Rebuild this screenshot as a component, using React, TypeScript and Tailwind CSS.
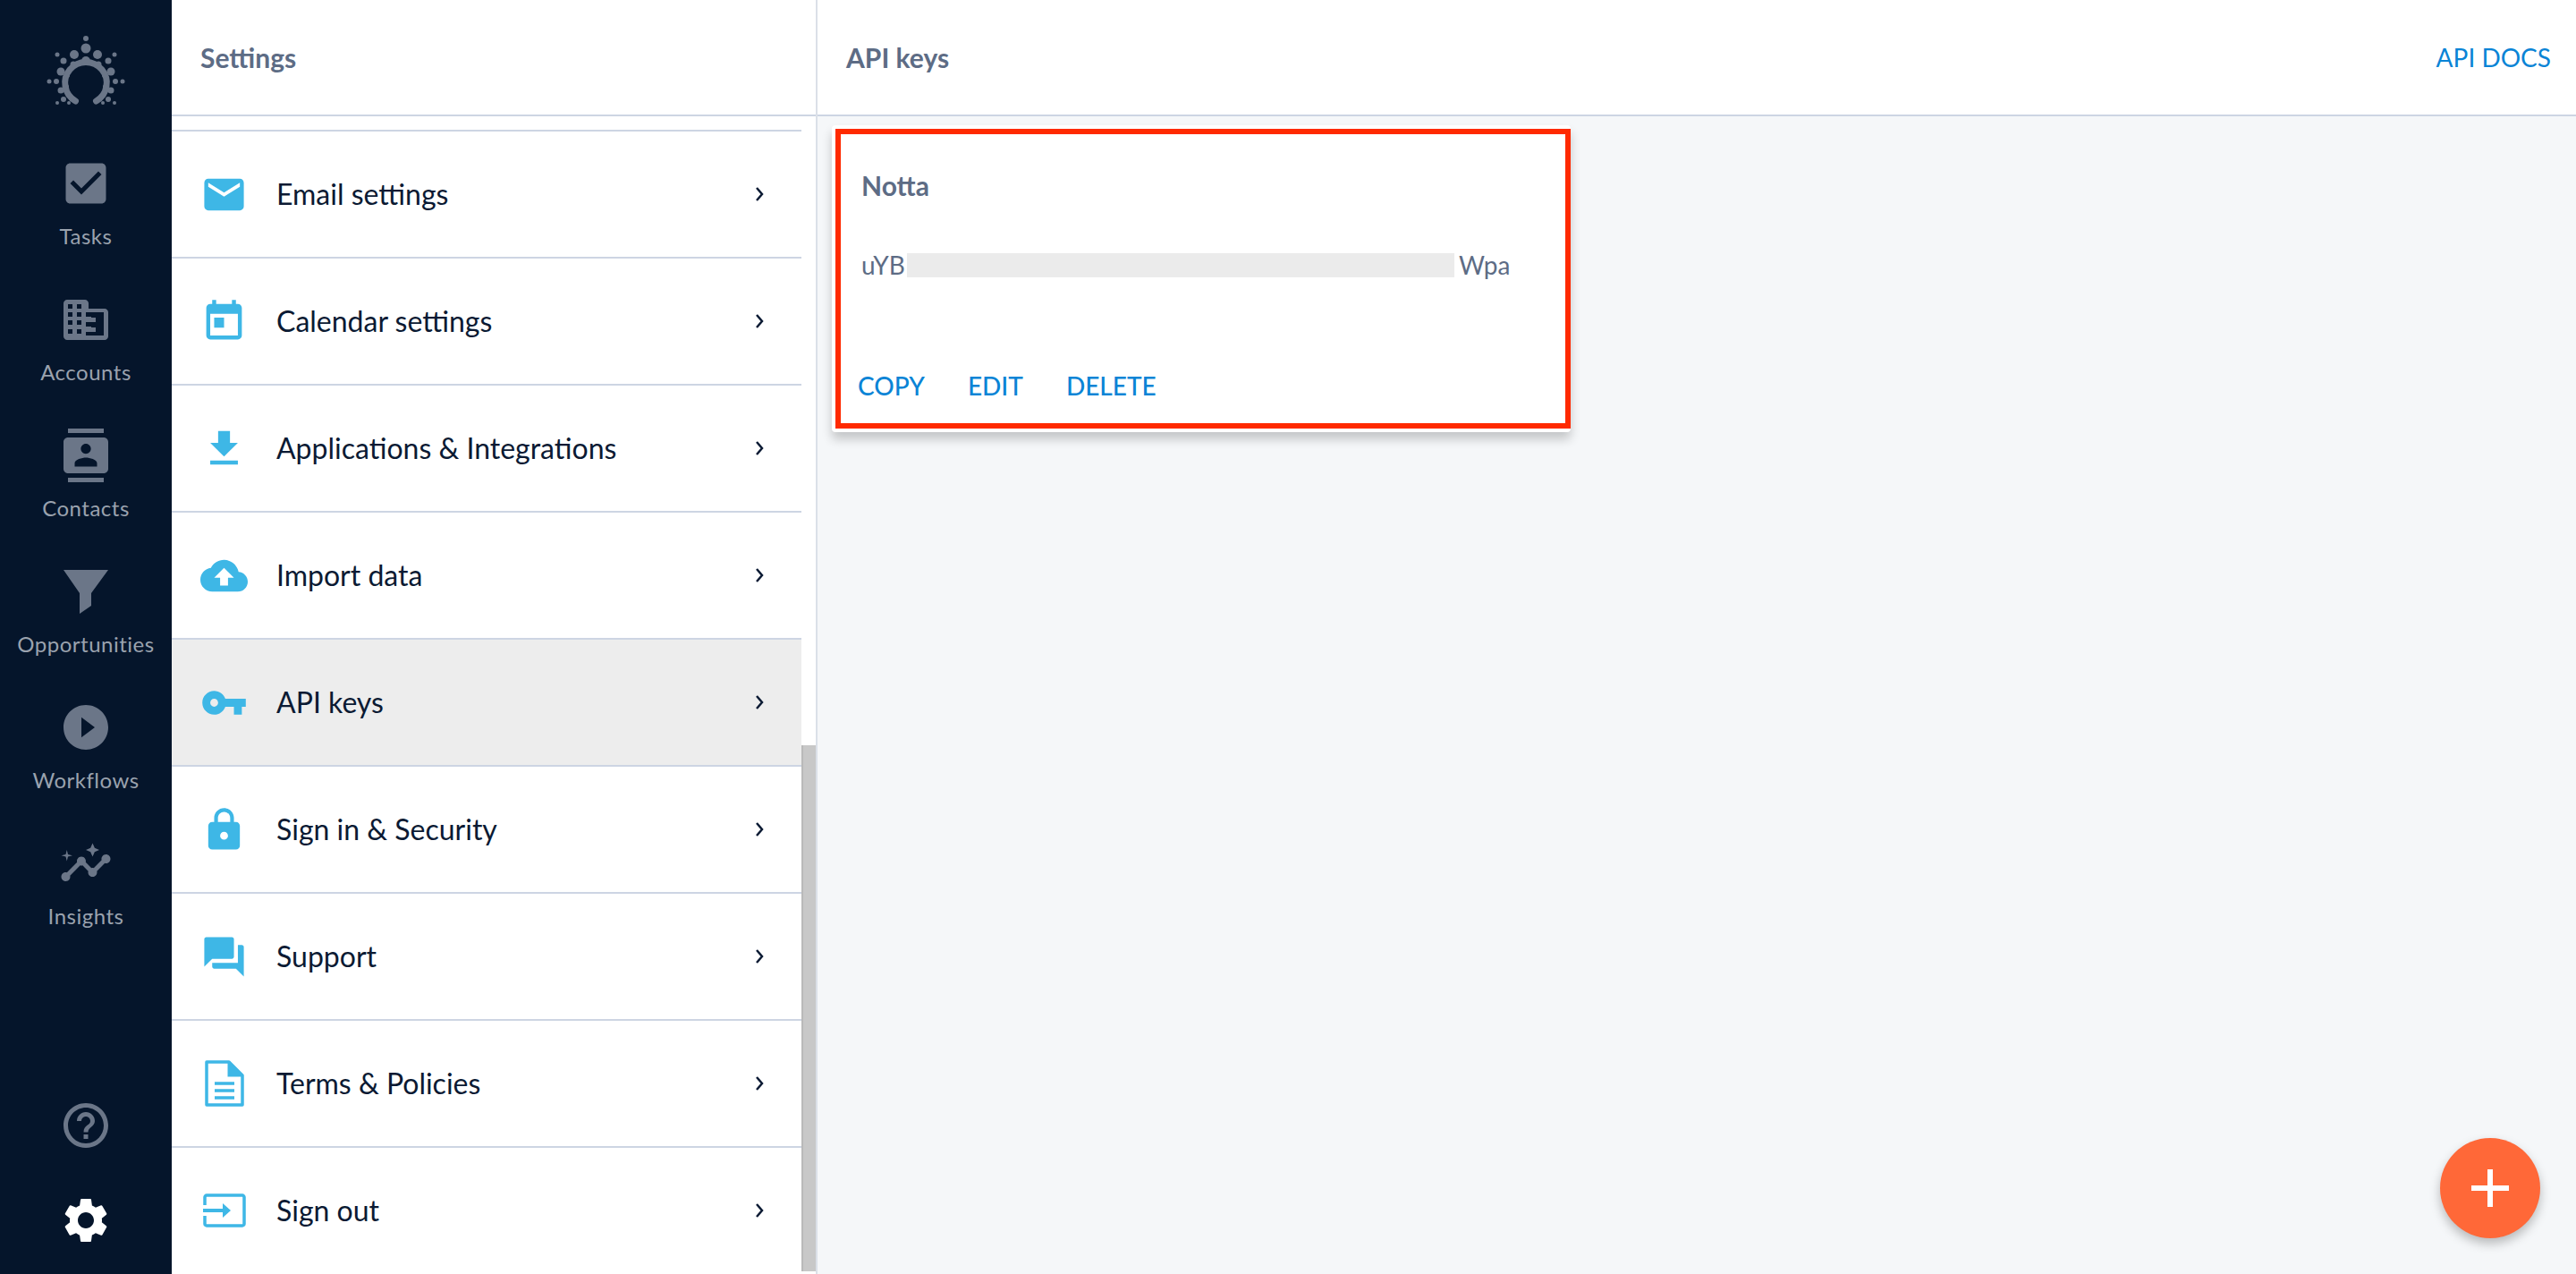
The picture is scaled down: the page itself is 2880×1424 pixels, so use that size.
import type { ReactNode } from "react";

const FONT = "font-['Lato','Noto_Sans',sans-serif]";

function Glyph({ d, size, className }: { d: string; size: number; className: string }) {
  return (
    <svg width={size} height={size} viewBox="0 0 24 24" className={className} fill="currentColor">
      <path fillRule="evenodd" d={d} />
    </svg>
  );
}

function Logo() {
  const dots = [
    [96, 43, 3],
    [96, 54, 5.5],
    [83, 61, 5],
    [109, 61, 5],
    [64, 61, 2.5],
    [128, 61, 2.5],
    [71, 68, 3.5],
    [121, 68, 3.5],
    [68, 80, 4.5],
    [124, 80, 4.5],
    [63, 91, 3],
    [129, 91, 3],
    [55, 91, 2.5],
    [137, 91, 2.5],
    [68, 101, 3.5],
    [124, 101, 3.5],
    [71, 111, 3],
    [121, 111, 3],
    [64, 115, 2],
    [128, 115, 2],
    [77, 115, 2],
    [115, 115, 2],
    [96, 68, 5],
    [82, 72, 3.5],
    [110, 72, 3.5],
    [75, 84, 3],
    [117, 84, 3],
    [74, 97, 3],
    [118, 97, 3],
  ];

  return (
    <svg width="96" height="90" viewBox="48 35 96 90" fill="#6b7688">
      <path d="M84.500 113 A23.300 23.300 0 1 1 107.500 113" fill="none" stroke="#6b7688" strokeWidth="7" strokeLinecap="round" />
      {dots.map(([cx, cy, r]) => (
        <circle key={`${cx}-${cy}`} cx={cx} cy={cy} r={r} />
      ))}
    </svg>
  );
}

function AccountsIcon() {
  return (
    <svg width="50" height="45" viewBox="0 0 50 45" fill="#6b7688">
      <path
        fillRule="evenodd"
        d="M4 0h20c2 0 4 2 4 4v6h18c2 0 4 2 4 4v27c0 2-2 4-4 4H4c-2 0-4-2-4-4V4c0-2 2-4 4-4zM5 5v5h5V5zM15 5v5h5V5zM5 14v5h5v-5zM15 14v5h5v-5zM5 23v5h5v-5zM15 23v5h5v-5zM5 33v5h5v-5zM15 33v5h5v-5zM25 14v26h20V14zM31 20h5v5h-5zM31 31h5v5h-5z"
      />
      <path d="M25 19h6v6h-6zM25 30h6v6h-6z" />
    </svg>
  );
}

function FunnelIcon() {
  return (
    <svg width="50" height="49" viewBox="0 0 50 49" fill="#6b7688">
      <path d="M0 0h50L31 26v14l-13 9V26z" />
    </svg>
  );
}

function TermsIcon() {
  return (
    <svg width="44" height="52" viewBox="0 0 44 52" fill="none" stroke="#3eb7e6">
      <path d="M2 2h25l15 15v33H2z" strokeWidth="3.500" strokeLinejoin="round" />
      <path d="M27 2v15h15" fill="#3eb7e6" strokeWidth="3" />
      <path d="M11 26h22M11 34h22M11 42h22" strokeWidth="3.500" />
    </svg>
  );
}

function SignOutIcon() {
  return (
    <svg width="48" height="38" viewBox="0 0 48 38" fill="none" stroke="#3eb7e6">
      <path d="M2 13V4c0-1 1-2 2-2h40c1 0 2 1 2 2v30c0 1-1 2-2 2H4c-1 0-2-1-2-2v-9" strokeWidth="3.500" />
      <path d="M0 19h24" strokeWidth="4" />
      <path d="M22 11l9 8-9 8z" fill="#3eb7e6" stroke="none" />
    </svg>
  );
}

const PATHS = {
  tasks:
    "M19 3H5c-1.110 0-2 .9-2 2v14c0 1.100.89 2 2 2h14c1.110 0 2-.9 2-2V5c0-1.100-.89-2-2-2zm-9 14l-5-5 1.410-1.410L10 14.170l7.590-7.590L19 8l-9 9z",
  contacts:
    "M20 0H4v2h16V0zM4 24h16v-2H4v2zM20 4H4c-1.100 0-2 .9-2 2v12c0 1.100.9 2 2 2h16c1.100 0 2-.9 2-2V6c0-1.100-.9-2-2-2zm-8 2.750c1.240 0 2.250 1.010 2.250 2.250s-1.010 2.250-2.250 2.250S9.750 10.240 9.750 9 10.760 6.750 12 6.750zM17 17H7v-1.500c0-1.670 3.330-2.500 5-2.500s5 .83 5 2.500V17z",
  workflows:
    "M12 2C6.480 2 2 6.480 2 12s4.480 10 10 10 10-4.480 10-10S17.520 2 12 2zm-2 14.500v-9l6 4.500-6 4.500z",
  insights:
    "M21 8c-1.450 0-2.260 1.440-1.930 2.510l-3.550 3.560c-.3-.09-.74-.09-1.040 0l-2.550-2.550C12.270 10.450 11.460 9 10 9c-1.450 0-2.270 1.440-1.930 2.520l-4.560 4.550C2.440 15.740 1 16.550 1 18c0 1.100.9 2 2 2 1.450 0 2.260-1.440 1.930-2.510l4.550-4.560c.3.09.74.09 1.040 0l2.550 2.550C12.730 16.550 13.540 18 15 18c1.450 0 2.270-1.440 1.930-2.520l3.560-3.550c1.070.33 2.510-.48 2.510-1.930 0-1.100-.9-2-2-2zM15 9l.94-2.070L18 6l-2.060-.93L15 3l-.92 2.070L12 6l2.080.93zM3.500 11L4 9l2-.5L4 8l-.5-2L3 8l-2 .5L3 9z",
  help:
    "M11 18h2v-2h-2v2zm1-16C6.480 2 2 6.480 2 12s4.480 10 10 10 10-4.480 10-10S17.520 2 12 2zm0 18c-4.410 0-8-3.590-8-8s3.590-8 8-8 8 3.590 8 8-3.590 8-8 8zm0-14c-2.210 0-4 1.790-4 4h2c0-1.100.9-2 2-2s2 .9 2 2c0 2-3 1.750-3 5h2c0-2.250 3-2.500 3-5 0-2.210-1.790-4-4-4z",
  gear:
    "M19.140 12.940c.04-.3.06-.61.06-.94 0-.32-.02-.64-.07-.94l2.030-1.580c.18-.14.23-.41.12-.61l-1.920-3.320c-.12-.22-.37-.29-.59-.22l-2.390.96c-.5-.38-1.030-.7-1.620-.94l-.36-2.540c-.04-.24-.24-.41-.48-.41h-3.840c-.24 0-.43.17-.47.41l-.36 2.540c-.59.24-1.130.57-1.620.94l-2.390-.96c-.22-.08-.47 0-.59.22L2.740 8.870c-.12.21-.08.47.12.61l2.030 1.580c-.05.3-.09.63-.09.94s.02.64.07.94l-2.030 1.580c-.18.14-.23.41-.12.61l1.920 3.320c.12.22.37.29.59.22l2.390-.96c.5.38 1.030.7 1.620.94l.36 2.540c.05.24.24.41.48.41h3.840c.24 0 .44-.17.47-.41l.36-2.540c.59-.24 1.130-.56 1.620-.94l2.390.96c.22.08.47 0 .59-.22l1.920-3.320c.12-.22.07-.47-.12-.61l-2.010-1.580zM12 15.600c-1.980 0-3.600-1.620-3.600-3.600s1.620-3.600 3.600-3.600 3.600 1.620 3.600 3.600-1.620 3.600-3.600 3.600z",
  email:
    "M20 4H4c-1.100 0-1.990.9-1.990 2L2 18c0 1.100.9 2 2 2h16c1.100 0 2-.9 2-2V6c0-1.100-.9-2-2-2zm0 4l-8 5-8-5V6l8 5 8-5v2z",
  calendar:
    "M19 3h-1V1h-2v2H8V1H6v2H5c-1.110 0-1.990.9-1.990 2L3 19c0 1.100.89 2 2 2h14c1.100 0 2-.9 2-2V5c0-1.100-.9-2-2-2zm0 16H5V8h14v11zM7 10h5v5H7z",
  download: "M19 9h-4V3H9v6H5l7 7 7-7zM5 18v2h14v-2H5z",
  upload:
    "M19.350 10.040C18.670 6.590 15.640 4 12 4 9.110 4 6.600 5.640 5.350 8.040 2.340 8.360 0 10.910 0 14c0 3.310 2.690 6 6 6h13c2.760 0 5-2.240 5-5 0-2.640-2.050-4.780-4.650-4.960zM14 13v4h-4v-4H7l5-5 5 5h-3z",
  key:
    "M12.650 10C11.830 7.670 9.610 6 7 6c-3.310 0-6 2.690-6 6s2.690 6 6 6c2.610 0 4.830-1.670 5.650-4H17v4h4v-4h2v-4H12.650zM7 14c-1.100 0-2-.9-2-2s.9-2 2-2 2 .9 2 2-.9 2-2 2z",
  lock:
    "M18 8h-1V6c0-2.760-2.240-5-5-5S7 3.240 7 6v2H6c-1.100 0-2 .9-2 2v10c0 1.100.9 2 2 2h12c1.100 0 2-.9 2-2V10c0-1.100-.9-2-2-2zm-6 9c-1.100 0-2-.9-2-2s.9-2 2-2 2 .9 2 2-.9 2-2 2zm3.100-9H8.900V6c0-1.710 1.390-3.100 3.100-3.100 1.710 0 3.100 1.390 3.100 3.100v2z",
  support:
    "M21 6h-2v9H6v2c0 .55.45 1 1 1h11l4 4V7c0-.55-.45-1-1-1zm-4 6V3c0-.55-.45-1-1-1H3c-.55 0-1 .45-1 1v14l4-4h10c.55 0 1-.45 1-1z",
};

const navItems: { label: string; icon: ReactNode }[] = [
  { label: "Tasks", icon: <Glyph d={PATHS.tasks} size={60} className="text-[#6b7688]" /> },
  { label: "Accounts", icon: <AccountsIcon /> },
  { label: "Contacts", icon: <Glyph d={PATHS.contacts} size={60} className="text-[#6b7688]" /> },
  { label: "Opportunities", icon: <FunnelIcon /> },
  { label: "Workflows", icon: <Glyph d={PATHS.workflows} size={60} className="text-[#6b7688]" /> },
  { label: "Insights", icon: <Glyph d={PATHS.insights} size={60} className="text-[#6b7688]" /> },
];

const rowIcon = (d: string) => <Glyph d={d} size={53} className="text-[#3eb7e6]" />;

const settingsRows: { label: string; icon: ReactNode; active?: boolean }[] = [
  { label: "Email settings", icon: rowIcon(PATHS.email) },
  { label: "Calendar settings", icon: rowIcon(PATHS.calendar) },
  { label: "Applications & Integrations", icon: rowIcon(PATHS.download) },
  { label: "Import data", icon: rowIcon(PATHS.upload) },
  { label: "API keys", icon: rowIcon(PATHS.key), active: true },
  { label: "Sign in & Security", icon: rowIcon(PATHS.lock) },
  { label: "Support", icon: rowIcon(PATHS.support) },
  { label: "Terms & Policies", icon: <TermsIcon /> },
  { label: "Sign out", icon: <SignOutIcon /> },
];

function Sidebar() {
  return (
    <aside className="flex h-full w-[192px] shrink-0 flex-col items-center bg-[#05152b]">
      <div className="flex h-[130px] items-start pt-[35px]">
        <Logo />
      </div>

      <nav className="flex w-full flex-col pt-[24px]">
        {navItems.map((item) => (
          <div key={item.label} className="flex h-[152px] flex-col items-center">
            <div className="flex h-[80px] w-full items-center justify-center pt-[22px]">{item.icon}</div>
            <span className="pt-[14px] text-[24px] leading-[32px] tracking-[0.5px] text-[#9aa2ae]">{item.label}</span>
          </div>
        ))}
      </nav>

      <div className="mt-auto flex flex-col items-center pb-[30px]">
        <Glyph d={PATHS.help} size={60} className="text-[#6b7688]" />
        <div className="pt-[46px]">
          <Glyph d={PATHS.gear} size={60} className="text-white" />
        </div>
      </div>
    </aside>
  );
}

function SettingsPanel() {
  return (
    <section className="flex h-full w-[722px] shrink-0 flex-col border-r-2 border-[#dbe0e8] bg-white">
      <header className="flex h-[130px] shrink-0 items-center border-b-2 border-[#cdd5e3] pl-[32px] text-[30px] font-bold text-[#5d6c85]">
        Settings
      </header>

      <div className="flex min-h-0 flex-1">
        <ul className="flex-1 pt-[15px]">
          {settingsRows.map((row) => (
            <li
              key={row.label}
              className={`flex h-[142px] items-center border-t-2 border-[#cdd5e3] ${row.active ? "bg-[#ededed]" : "bg-white"}`}
            >
              <div className="flex w-[117px] items-center justify-center">{row.icon}</div>
              <span className="flex-1 text-[32px] text-[#0b1a33]">{row.label}</span>
              <svg width="12" height="18" viewBox="0 0 12 18" fill="none" stroke="#0b1a33" strokeWidth="2.500" className="mr-[41px]">
                <path d="M3 2l6 7-6 7" />
              </svg>
            </li>
          ))}
        </ul>

        {/* Scrollbar */}
        <div className="flex w-[16px] flex-col justify-end pb-[3px]">
          <div className="h-[588px] border-l-2 border-[#b9b9b9] bg-[#c8c8c8]" />
        </div>
      </div>
    </section>
  );
}

function ApiKeyCard() {
  return (
    <div className="relative flex h-[343px] w-[826px] flex-col rounded-[4px] bg-white pl-[33px] shadow-[0_8px_12px_rgba(0,0,0,0.2)]">
      <h3 className="pt-[48px] text-[30px] leading-[38px] font-bold text-[#5d6c85]">Notta</h3>

      <div className="flex h-[40px] items-center pt-[0px] mt-[50px] text-[28px] text-[#5d6c85]">
        <span className="w-[51px]">uYB</span>
        <div className="h-[27px] w-[612px] bg-[#ebebeb]" />
        <span className="pl-[5px]">Wpa</span>
      </div>

      <div className="-ml-[4px] mt-auto flex gap-[48px] pb-[34px] text-[28px] leading-[36px] font-medium text-[#0a84d6]">
        <span>COPY</span>
        <span>EDIT</span>
        <span>DELETE</span>
      </div>

      {/* Red annotation frame */}
      <div className="pointer-events-none absolute top-[4px] right-0 bottom-[4px] left-[4px] border-[6px] border-[#ff2a00]" />
    </div>
  );
}

export default function App() {
  return (
    <div className={`flex h-[1424px] w-[2880px] overflow-hidden ${FONT}`}>
      <Sidebar />
      <SettingsPanel />

      <main className="relative flex h-full flex-1 flex-col bg-[#f5f7f9]">
        <header className="flex h-[130px] shrink-0 items-center justify-between border-b-2 border-[#cdd5e3] bg-white pr-[28px] pl-[32px]">
          <h2 className="text-[30px] font-bold text-[#5d6c85]">API keys</h2>
          <span className="text-[28px] text-[#0a84d6]">API DOCS</span>
        </header>

        <div className="pt-[10px] pl-[16px]">
          <ApiKeyCard />
        </div>

        {/* Floating add button */}
        <button className="absolute right-[40px] bottom-[40px] flex h-[112px] w-[112px] items-center justify-center rounded-full bg-[#ff6838] shadow-[0_6px_12px_rgba(0,0,0,0.25)]">
          <svg width="42" height="42" viewBox="0 0 42 42" fill="#ffffff">
            <path d="M18 0h6v18h18v6H24v18h-6V24H0v-6h18z" />
          </svg>
        </button>
      </main>
    </div>
  );
}
